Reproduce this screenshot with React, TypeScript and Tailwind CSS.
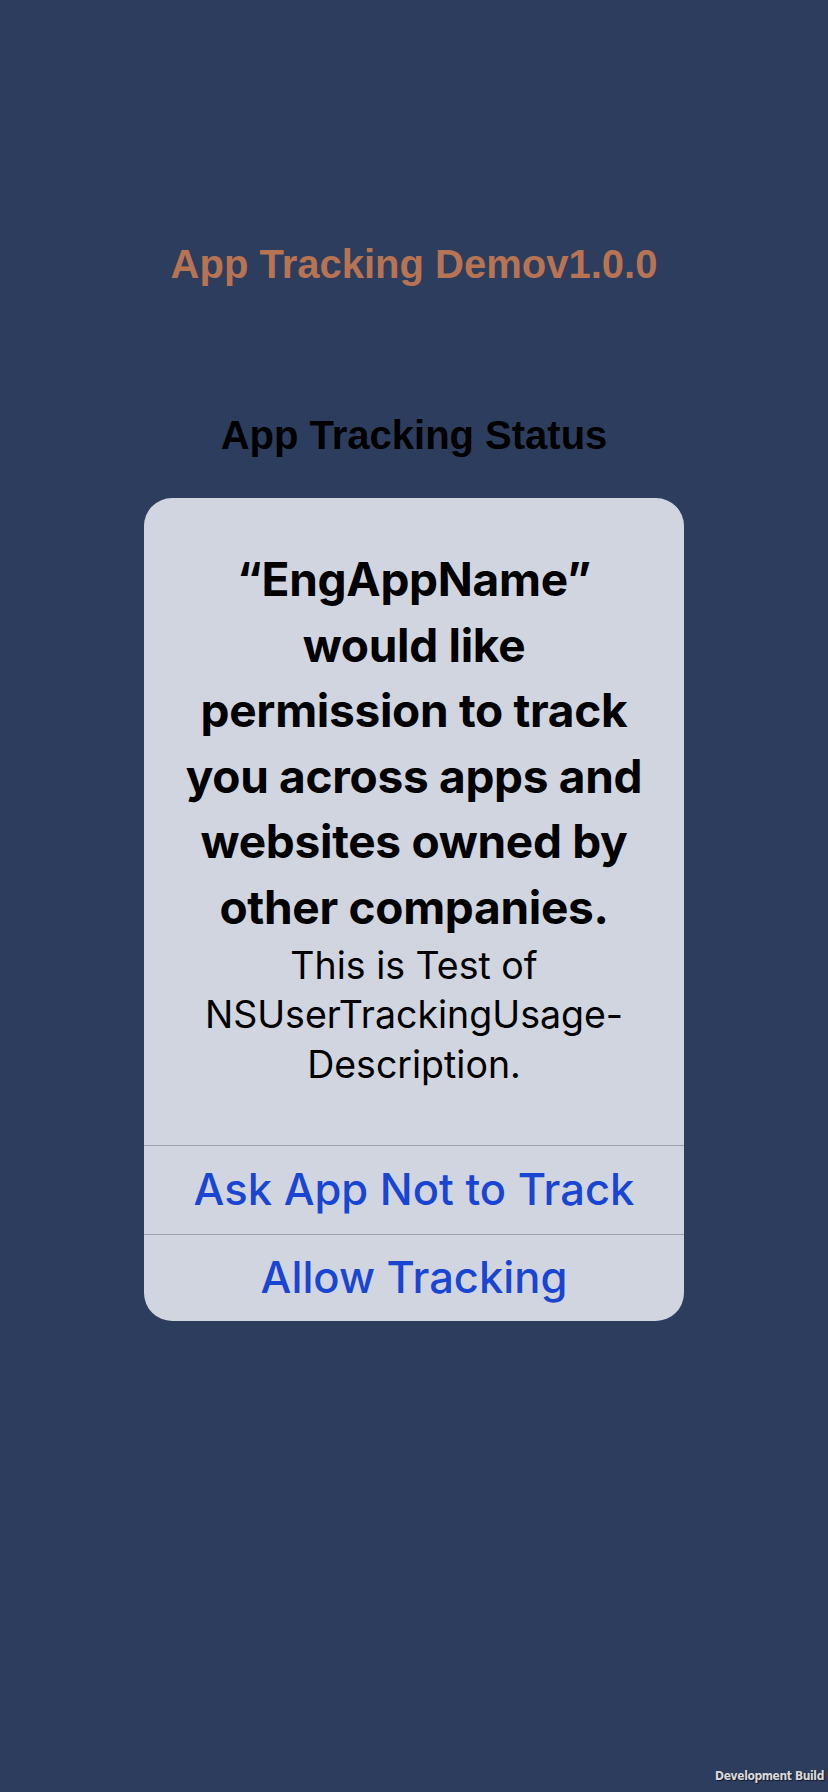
const sf = "font-['Inter','Noto_Sans',sans-serif]";

function TrackingAlert() {
  const heading = [
    "\u201CEngAppName\u201D",
    "would like",
    "permission to track",
    "you across apps and",
    "websites owned by",
    "other companies.",
  ];
  const body = ["This is Test of", "NSUserTrackingUsage-", "Description."];

  return (
    <div className={`w-[540px] rounded-[28px] bg-[#d0d5e0] overflow-hidden ${sf} text-black text-center`}>
      <div className="flex flex-col items-center pt-[49px] pb-[55px]">
        {heading.map((line) => (
          <p key={line} className="text-[46px] leading-[65.6px] font-bold whitespace-nowrap tracking-[-0.3px]">
            {line}
          </p>
        ))}
        {body.map((line) => (
          <p key={line} className="text-[37.5px] leading-[49.7px] font-normal whitespace-nowrap">
            {line}
          </p>
        ))}
      </div>
      <div className="border-t border-[#9ca2b0] h-[89px] flex items-center justify-center">
        <span className="text-[43.5px] font-medium text-[#1a45d2] whitespace-nowrap">Ask App Not to Track</span>
      </div>
      <div className="border-t border-[#9ca2b0] h-[87px] flex items-center justify-center">
        <span className="text-[43.5px] font-medium text-[#1a45d2] whitespace-nowrap">Allow Tracking</span>
      </div>
    </div>
  );
}

export default function App() {
  return (
    <div className="relative w-[828px] h-[1792px] bg-[#2d3d5e] flex flex-col items-center font-['Liberation_Sans',Arial,sans-serif]">
      <h1 className="mt-[241px] text-[40px] leading-[46px] font-bold text-[#b87352]">App Tracking Demov1.0.0</h1>
      <h2 className="mt-[125px] text-[40px] leading-[46px] font-bold text-black">App Tracking Status</h2>
      <div className="mt-[40px]">
        <TrackingAlert />
      </div>
      <span className="absolute right-[4px] bottom-[9px] text-[12px] leading-[14px] font-bold tracking-[-0.4px] text-[#d8d8dc] font-['DejaVu_Sans_Condensed','DejaVu_Sans',sans-serif] [text-shadow:1px_1px_1px_rgba(0,0,0,0.6)]">
        Development Build
      </span>
    </div>
  );
}
